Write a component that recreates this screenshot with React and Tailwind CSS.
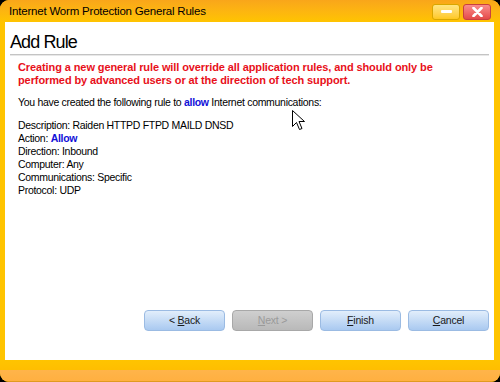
const DETAILS = [
  { label: "Description", value: "Raiden HTTPD FTPD MAILD DNSD" },
  { label: "Action", value: "Allow", accent: true },
  { label: "Direction", value: "Inbound" },
  { label: "Computer", value: "Any" },
  { label: "Communications", value: "Specific" },
  { label: "Protocol", value: "UDP" },
];

/* ---------- button ---------- */
function WizButton({ children, disabled }) {
  return (
    <button
      disabled={disabled}
      className={
        disabled
          ? "w-[81px] h-[21px] rounded-[4px] border border-[#a8a8a8] bg-gradient-to-b from-[#cfcfcf] to-[#b9b9b9] text-[#9a9a9a] text-[10.5px] tracking-[-0.2px]"
          : "w-[81px] h-[21px] rounded-[4px] border border-[#9bbbe3] bg-gradient-to-b from-[#e2eefb] to-[#a9c9f0] text-[#1a1a1a] text-[10.5px] tracking-[-0.2px]"
      }
    >
      {children}
    </button>
  );
}

export default function App() {
  return (
    <div className="w-[500px] h-[382px] bg-black font-['Liberation_Sans',Arial,sans-serif] relative">
      <div className="w-full h-full rounded-[9px] overflow-hidden flex flex-col bg-[#ffc400]">
        {/* Title bar */}
        <div className="h-[22px] flex items-center justify-between pl-[9px] pr-[9px] bg-gradient-to-b from-[#f9a61a] via-[#fdb510] to-[#ffc400]">
          <span className="text-[11.5px] text-black leading-none tracking-[-0.2px] mt-[1px]">
            Internet Worm Protection General Rules
          </span>
          <div className="flex gap-[3px] mt-[1px]">
            <div className="w-[28px] h-[16px] rounded-[3px] border border-[#d9a600] bg-gradient-to-b from-[#ffe680] to-[#ffc81a] flex items-center justify-center">
              <div className="w-[11px] h-[3px] bg-white rounded-[1px]" />
            </div>
            <div className="w-[28px] h-[16px] rounded-[3px] border border-[#c84040] bg-gradient-to-b from-[#f98b8b] to-[#e44a4a] flex items-center justify-center">
              <svg width="11" height="10" viewBox="0 0 11 10">
                <path d="M1.5 1 L9.5 9 M9.5 1 L1.5 9" stroke="white" strokeWidth="2.6" strokeLinecap="round" />
              </svg>
            </div>
          </div>
        </div>

        {/* Body */}
        <div className="flex-1 mx-[5px] mr-[6px] bg-white flex flex-col">
          <div className="px-[5px] pt-[9px]">
            <h1 className="text-[18px] leading-[22px] text-black tracking-[-0.9px]">Add Rule</h1>
            <div className="mt-[1px] h-[2px] bg-[#c4c4c4] border-b border-[#e8e8e8]" />
          </div>

          <div className="pl-[13px] pt-[5px] text-[10.5px] leading-[13px] tracking-[-0.3px] text-black">
            <p className="font-bold text-[#e8101a] text-[11px] leading-[13px] tracking-[-0.1px] whitespace-nowrap">
              Creating a new general rule will override all application rules, and should only be
              <br />
              performed by advanced users or at the direction of tech support.
            </p>
            <p className="mt-[9px]">
              You have created the following rule to{" "}
              <span className="font-bold text-[#1010d8]">allow</span> Internet communications:
            </p>
            <div className="mt-[10px] flex flex-col">
              {DETAILS.map(({ label, value, accent }) => (
                <div key={label}>
                  {label}:{" "}
                  <span className={accent ? "font-bold text-[#1010d8]" : ""}>{value}</span>
                </div>
              ))}
            </div>
          </div>

          <div className="flex-1" />

          <div className="flex justify-end gap-[7px] pr-[5px] pb-[29px]">
            <WizButton>
              &lt; <u>B</u>ack
            </WizButton>
            <WizButton disabled>
              <u>N</u>ext &gt;
            </WizButton>
            <WizButton>
              <u>F</u>inish
            </WizButton>
            <WizButton>
              <u>C</u>ancel
            </WizButton>
          </div>
        </div>

        {/* Bottom frame */}
        <div className="h-[10px] bg-gradient-to-b from-[#ffc400] to-[#ffbe00]" />
        <div className="h-[12px] bg-gradient-to-b from-[#ffb44a] to-[#ffb040] border-b border-[#e09a20]" />
      </div>

      {/* Mouse cursor */}
      <svg className="absolute left-[292px] top-[110px]" width="14" height="22" viewBox="0 0 14 22">
        <path
          d="M0.5 0.5 L0.5 16.5 L4.5 12.5 L7.5 19.5 L10 18.5 L7 11.5 L12.5 11.5 Z"
          fill="white"
          stroke="black"
          strokeWidth="1"
          strokeLinejoin="miter"
        />
      </svg>
    </div>
  );
}
